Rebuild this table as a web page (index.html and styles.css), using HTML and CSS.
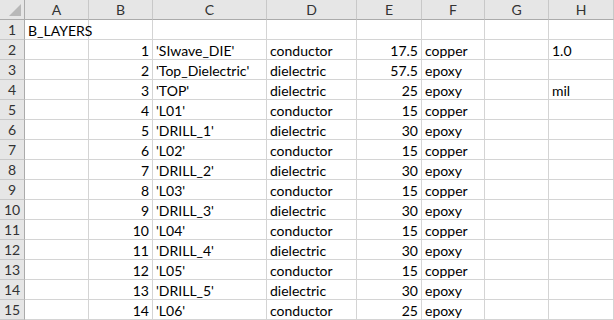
FILE: index.html
```html
<!DOCTYPE html>
<html>
<head>
<meta charset="utf-8">
<link rel="stylesheet" href="styles.css">
</head>
<body>
<div class="sheet">
  <div class="corner"><span class="tri"></span></div>
  <div class="ch">A</div><div class="ch">B</div><div class="ch">C</div><div class="ch">D</div><div class="ch">E</div><div class="ch">F</div><div class="ch">G</div><div class="ch">H</div>

  <div class="rh">1</div><div class="c">B_LAYERS</div><div class="c"></div><div class="c"></div><div class="c"></div><div class="c"></div><div class="c"></div><div class="c"></div><div class="c"></div>
  <div class="rh">2</div><div class="c"></div><div class="c n">1</div><div class="c">'SIwave_DIE'</div><div class="c">conductor</div><div class="c n">17.5</div><div class="c">copper</div><div class="c"></div><div class="c">1.0</div>
  <div class="rh">3</div><div class="c"></div><div class="c n">2</div><div class="c">'Top_Dielectric'</div><div class="c">dielectric</div><div class="c n">57.5</div><div class="c">epoxy</div><div class="c"></div><div class="c"></div>
  <div class="rh">4</div><div class="c"></div><div class="c n">3</div><div class="c">'TOP'</div><div class="c">dielectric</div><div class="c n">25</div><div class="c">epoxy</div><div class="c"></div><div class="c">mil</div>
  <div class="rh">5</div><div class="c"></div><div class="c n">4</div><div class="c">'L01'</div><div class="c">conductor</div><div class="c n">15</div><div class="c">copper</div><div class="c"></div><div class="c"></div>
  <div class="rh">6</div><div class="c"></div><div class="c n">5</div><div class="c">'DRILL_1'</div><div class="c">dielectric</div><div class="c n">30</div><div class="c">epoxy</div><div class="c"></div><div class="c"></div>
  <div class="rh">7</div><div class="c"></div><div class="c n">6</div><div class="c">'L02'</div><div class="c">conductor</div><div class="c n">15</div><div class="c">copper</div><div class="c"></div><div class="c"></div>
  <div class="rh">8</div><div class="c"></div><div class="c n">7</div><div class="c">'DRILL_2'</div><div class="c">dielectric</div><div class="c n">30</div><div class="c">epoxy</div><div class="c"></div><div class="c"></div>
  <div class="rh">9</div><div class="c"></div><div class="c n">8</div><div class="c">'L03'</div><div class="c">conductor</div><div class="c n">15</div><div class="c">copper</div><div class="c"></div><div class="c"></div>
  <div class="rh">10</div><div class="c"></div><div class="c n">9</div><div class="c">'DRILL_3'</div><div class="c">dielectric</div><div class="c n">30</div><div class="c">epoxy</div><div class="c"></div><div class="c"></div>
  <div class="rh">11</div><div class="c"></div><div class="c n">10</div><div class="c">'L04'</div><div class="c">conductor</div><div class="c n">15</div><div class="c">copper</div><div class="c"></div><div class="c"></div>
  <div class="rh">12</div><div class="c"></div><div class="c n">11</div><div class="c">'DRILL_4'</div><div class="c">dielectric</div><div class="c n">30</div><div class="c">epoxy</div><div class="c"></div><div class="c"></div>
  <div class="rh">13</div><div class="c"></div><div class="c n">12</div><div class="c">'L05'</div><div class="c">conductor</div><div class="c n">15</div><div class="c">copper</div><div class="c"></div><div class="c"></div>
  <div class="rh">14</div><div class="c"></div><div class="c n">13</div><div class="c">'DRILL_5'</div><div class="c">dielectric</div><div class="c n">30</div><div class="c">epoxy</div><div class="c"></div><div class="c"></div>
  <div class="rh">15</div><div class="c"></div><div class="c n">14</div><div class="c">'L06'</div><div class="c">conductor</div><div class="c n">25</div><div class="c">epoxy</div><div class="c"></div><div class="c"></div>
</div>
</body>
</html>
```
FILE: styles.css
```css
html, body {
  margin: 0;
  padding: 0;
  background: #ffffff;
}
.sheet {
  display: grid;
  grid-template-columns: 25px 64px 64px 114px 90px 65px 63px 64px 1fr;
  grid-auto-rows: 20px;
  font-family: "Lato", "Liberation Sans", sans-serif;
  font-size: 14px;
  color: #000;
  width: 614px;
  overflow: hidden;
}
.sheet > div {
  box-sizing: border-box;
  white-space: nowrap;
  overflow: visible;
}
.corner {
  background: #e6e6e6;
  border-right: 1px solid #ababab;
  border-bottom: 1px solid #ababab;
  position: relative;
}
.tri {
  position: absolute;
  right: 3px;
  bottom: 3px;
  width: 0;
  height: 0;
  border-left: 12px solid transparent;
  border-bottom: 12px solid #b8b8b8;
}
.ch {
  background: #e6e6e6;
  border-right: 1px solid #c8c8c8;
  border-bottom: 1px solid #ababab;
  text-align: center;
  line-height: 19px;
  color: #333;
}
.rh {
  background: #e6e6e6;
  border-right: 1px solid #ababab;
  border-bottom: 1px solid #c8c8c8;
  text-align: center;
  line-height: 20px;
  color: #333;
}
.c {
  border-right: 1px solid #d4d4d4;
  border-bottom: 1px solid #d4d4d4;
  padding: 0 3px;
  line-height: 21px;
}
.n {
  text-align: right;
}
```
